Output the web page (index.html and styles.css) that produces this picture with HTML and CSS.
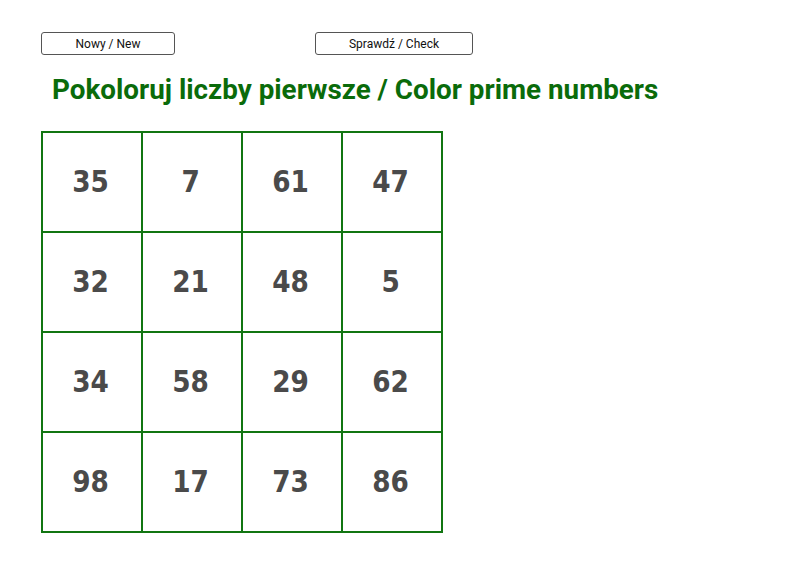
FILE: index.html
```html
<!DOCTYPE html>
<html>
<head>
<meta charset="utf-8">
<link rel="stylesheet" href="styles.css">
</head>
<body>
<div class="toolbar">
  <button class="btn btn-new">Nowy / New</button>
  <button class="btn btn-check">Sprawdź / Check</button>
</div>
<h1 class="title">Pokoloruj liczby pierwsze / Color prime numbers</h1>
<div class="board">
  <div class="cell"><span class="num">35</span></div><div class="cell"><span class="num">7</span></div><div class="cell"><span class="num">61</span></div><div class="cell"><span class="num">47</span></div>
  <div class="cell"><span class="num">32</span></div><div class="cell"><span class="num">21</span></div><div class="cell"><span class="num">48</span></div><div class="cell"><span class="num">5</span></div>
  <div class="cell"><span class="num">34</span></div><div class="cell"><span class="num">58</span></div><div class="cell"><span class="num">29</span></div><div class="cell"><span class="num">62</span></div>
  <div class="cell"><span class="num">98</span></div><div class="cell"><span class="num">17</span></div><div class="cell"><span class="num">73</span></div><div class="cell"><span class="num">86</span></div>
</div>
</body>
</html>
```
FILE: styles.css
```css
html, body {
  margin: 0;
  padding: 0;
  background: #ffffff;
  font-family: Roboto, "Liberation Sans", sans-serif;
}
.toolbar {
  display: flex;
  padding: 32px 0 0 41px;
}
.btn {
  height: 23px;
  box-sizing: border-box;
  border: 1px solid #555;
  border-radius: 3px;
  background: #fff;
  font-family: Roboto, sans-serif;
  font-size: 12px;
  color: #111;
  padding: 0;
}
.btn-new { width: 134px; }
.btn-check { width: 158px; margin-left: 140px; }
.title {
  margin: 19px 0 0 52px;
  font-size: 27.8px;
  font-weight: bold;
  color: #0a6b0a;
  line-height: 32px;
}
.board {
  display: grid;
  grid-template-columns: repeat(4, 98px);
  grid-auto-rows: 98px;
  gap: 2px;
  padding: 2px;
  width: max-content;
  background: #117511;
  margin: 25px 0 0 41px;
}
.cell {
  background: #fff;
  display: flex;
  align-items: center;
  justify-content: center;
  padding: 0 3px 2px 0;
  box-sizing: border-box;
  font-family: "DejaVu Sans", sans-serif;
  font-size: 31px;
  font-weight: bold;
  color: #4a4a4a;
}
.num {
  display: inline-block;
  transform: scaleX(0.85);
}
```
